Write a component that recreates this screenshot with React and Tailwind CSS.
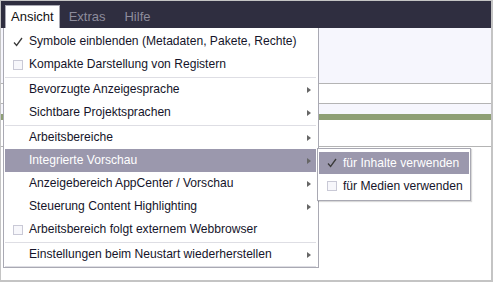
import React from "react";

const font = { fontFamily: '"Liberation Sans", Arial, sans-serif' };

const Check = ({ white }) => (
  <svg width="10" height="10" viewBox="0 0 10 10" className="block">
    <path
      d="M1 5.5 L3.6 8.5 L9 1"
      fill="none"
      stroke={white ? "#ffffff" : "#3a3a3a"}
      strokeWidth="1.3"
    />
  </svg>
);

const Box = () => (
  <span className="block w-[10px] h-[10px] border border-[#c9c9d6] bg-[#f7f7fb]" />
);

const Arrow = () => (
  <span className="block w-0 h-0 border-y-[3px] border-y-transparent border-l-[4px] border-l-[#666]" />
);

const items = [
  { label: "Symbole einblenden (Metadaten, Pakete, Rechte)", icon: "check" },
  { label: "Kompakte Darstellung von Registern", icon: "box", tall: true },
  { sep: true },
  { label: "Bevorzugte Anzeigesprache", sub: true },
  { label: "Sichtbare Projektsprachen", sub: true },
  { sep: true },
  { label: "Arbeitsbereiche", sub: true },
  { label: "Integrierte Vorschau", sub: true, active: true },
  { label: "Anzeigebereich AppCenter / Vorschau", sub: true },
  { label: "Steuerung Content Highlighting", sub: true },
  { label: "Arbeitsbereich folgt externem Webbrowser", icon: "box" },
  { sep: true },
  { label: "Einstellungen beim Neustart wiederherstellen", sub: true },
  { sep: true, last: true },
];

const MenuRow = ({ item }) => (
  <div
    className={`flex items-center h-[23px] pr-[5px] ${
      item.active ? "bg-[#9b98ad] text-white" : "text-[#15142a]"
    }`}
  >
    <span className="w-[24px] flex justify-center pl-[2px]">
      {item.icon === "check" && <Check />}
      {item.icon === "box" && <Box />}
    </span>
    <span className="flex-1 text-[12.1px] leading-none">{item.label}</span>
    {item.sub && <Arrow />}
  </div>
);

export default function App() {
  return (
    <div
      style={font}
      className="relative w-[493px] h-[282px] overflow-hidden bg-white border-t border-l border-r-2 border-b-2 border-[#c4c4c4]"
    >
      {/* top bar */}
      <div className="h-[27px] bg-[#2f2e40] flex items-end pl-[4px]">
        <div className="h-[23px] px-[5px] bg-white border border-b-0 border-[#a9a9b3] flex items-center text-[13px] text-[#111]">
          Ansicht
        </div>
        <div className="h-[23px] flex items-center ml-[9px] text-[13px] text-[#8d8c9c]">
          Extras
        </div>
        <div className="h-[23px] flex items-center ml-[19px] text-[13px] text-[#8d8c9c]">
          Hilfe
        </div>
      </div>

      {/* page behind the menu */}
      <div className="h-[56px] bg-[#f6f6fd] border-b border-[#b4b4b4]" />
      <div className="h-[20px] bg-white border-b border-[#b4b4b4]" />
      <div className="h-[10px] bg-[#f6f6fd]" />
      <div className="h-[6px] bg-[#8e9f75]" />
      <div className="h-[27px] bg-white border-b border-[#b4b4b4]" />

      {/* dropdown */}
      <div className="absolute left-[2px] top-[27px] w-[316px] bg-white border border-t-0 border-[#a9a9b3] pl-[1px] pr-[2px] pt-[2px]">
        {items.map((item, i) =>
          item.sep ? (
            <div
              key={i}
              className={`h-px bg-[#dedee4] ${item.last ? "" : "mt-[1px]"}`}
            />
          ) : (
            <MenuRow key={i} item={item} />
          )
        )}
      </div>

      {/* submenu */}
      <div className="absolute left-[316px] top-[147px] w-[154px] bg-white border border-[#a9a9b3] shadow-[1px_1px_1px_rgba(0,0,0,0.15)] px-[1px] pt-[3px] pb-[2px]">
        <div className="flex items-center h-[22px] bg-[#9b98ad] text-white">
          <span className="w-[24px] flex justify-center pl-[2px]">
            <Check white={false} />
          </span>
          <span className="text-[12.1px] leading-none">für Inhalte verwenden</span>
        </div>
        <div className="flex items-center h-[24px] text-[#15142a]">
          <span className="w-[24px] flex justify-center pl-[2px]">
            <Box />
          </span>
          <span className="text-[12.1px] leading-none">für Medien verwenden</span>
        </div>
      </div>
    </div>
  );
}
